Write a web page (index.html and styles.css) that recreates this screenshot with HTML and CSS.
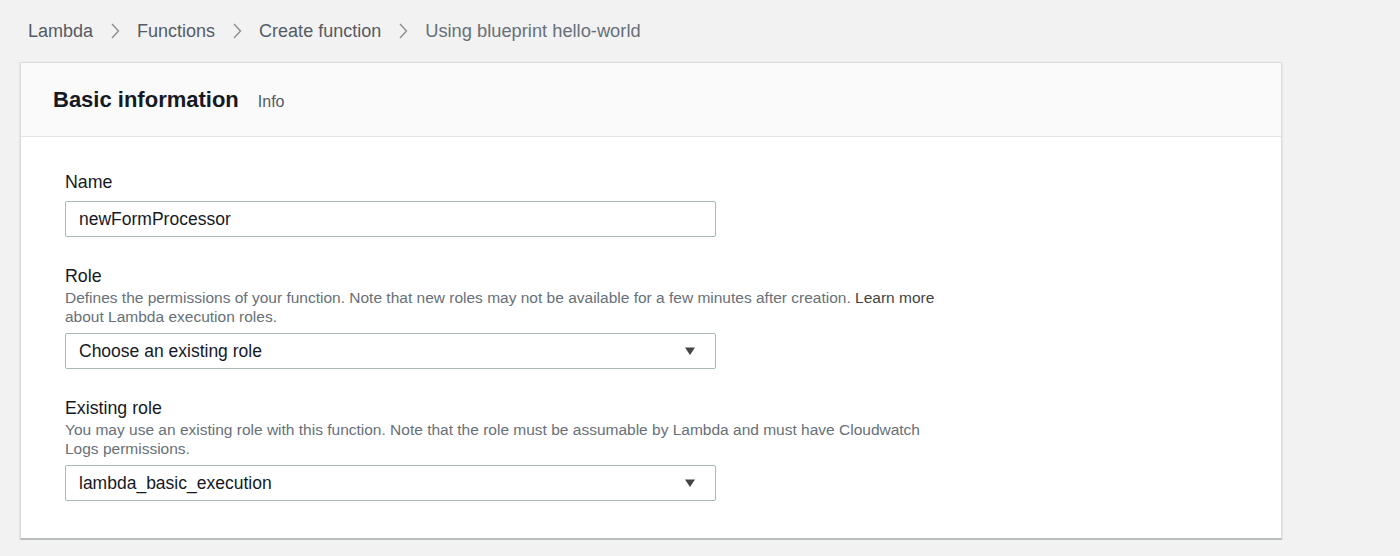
FILE: index.html
```html
<!DOCTYPE html>
<html>
<head>
<meta charset="utf-8">
<link rel="stylesheet" href="styles.css">
</head>
<body>
<nav class="crumbs">
  <span class="crumb">Lambda</span>
  <svg class="chev" width="10" height="16" viewBox="0 0 10 16"><path d="M2 1 L8.5 8 L2 15" fill="none" stroke="#8a8f94" stroke-width="1.4"/></svg>
  <span class="crumb">Functions</span>
  <svg class="chev" width="10" height="16" viewBox="0 0 10 16"><path d="M2 1 L8.5 8 L2 15" fill="none" stroke="#8a8f94" stroke-width="1.4"/></svg>
  <span class="crumb">Create function</span>
  <svg class="chev" width="10" height="16" viewBox="0 0 10 16"><path d="M2 1 L8.5 8 L2 15" fill="none" stroke="#8a8f94" stroke-width="1.4"/></svg>
  <span class="crumb current">Using blueprint hello-world</span>
</nav>
<section class="card">
  <header class="card-head">
    <h2>Basic information</h2>
    <span class="info">Info</span>
  </header>
  <div class="card-body">
    <div class="field">
      <label class="label">Name</label>
      <div class="input">newFormProcessor</div>
    </div>
    <div class="field">
      <label class="label">Role</label>
      <p class="desc">Defines the permissions of your function. Note that new roles may not be available for a few minutes after creation. <span class="link">Learn more</span> about Lambda execution roles.</p>
      <div class="input select">Choose an existing role
        <svg class="caret" width="12" height="10" viewBox="0 0 12 10"><path d="M1 1.5 H11 L6 9 Z" fill="#444"/></svg>
      </div>
    </div>
    <div class="field">
      <label class="label">Existing role</label>
      <p class="desc">You may use an existing role with this function. Note that the role must be assumable by Lambda and must have Cloudwatch Logs permissions.</p>
      <div class="input select">lambda_basic_execution
        <svg class="caret" width="12" height="10" viewBox="0 0 12 10"><path d="M1 1.5 H11 L6 9 Z" fill="#444"/></svg>
      </div>
    </div>
  </div>
</section>
</body>
</html>
```

FILE: styles.css
```css
html, body {
  margin: 0;
  padding: 0;
  background: #f2f2f2;
  font-family: "Liberation Sans", Arial, sans-serif;
  color: #16191f;
}
body {
  padding: 0 0 0 20px;
}
.crumbs {
  display: flex;
  align-items: center;
  height: 62px;
  padding-left: 8px;
  gap: 15px;
  font-size: 18px;
  color: #545b64;
}
.crumb.current {
  color: #687078;
  font-size: 18.3px;
}
.chev {
  display: block;
  margin: 0 2px;
}
.card {
  width: 1260px;
  background: #fff;
  border: 1px solid #dcdcdc;
  border-bottom: 2px solid #b7bcbf;
  box-shadow: 0 1px 2px rgba(0,0,0,0.15);
}
.card-head {
  display: flex;
  align-items: center;
  gap: 19px;
  height: 74px;
  padding: 0 32px;
  background: #fafafa;
  border-bottom: 1px solid #e4e4e4;
  box-sizing: border-box;
}
.card-head h2 {
  margin: 0;
  font-size: 22px;
  font-weight: bold;
  color: #16191f;
}
.info {
  font-size: 16px;
  color: #545b64;
  padding-top: 5px;
}
.card-body {
  padding: 34px 44px 37px;
  display: flex;
  flex-direction: column;
  gap: 28px;
}
.field {
  display: flex;
  flex-direction: column;
}
.label {
  font-size: 17.8px;
  line-height: 22px;
  color: #16191f;
  margin-bottom: 8px;
}
.desc {
  margin: -7px 0 7px;
  max-width: 875px;
  font-size: 15.5px;
  line-height: 19px;
  color: #687078;
}
.link {
  color: #444;
}
.input {
  box-sizing: border-box;
  width: 651px;
  height: 36px;
  border: 1px solid #aab7b8;
  border-radius: 2px;
  padding: 0 13px;
  display: flex;
  align-items: center;
  font-size: 17.5px;
  color: #16191f;
  background: #fff;
}
.select {
  justify-content: space-between;
  padding-right: 19px;
}
.caret {
  display: block;
}
```
